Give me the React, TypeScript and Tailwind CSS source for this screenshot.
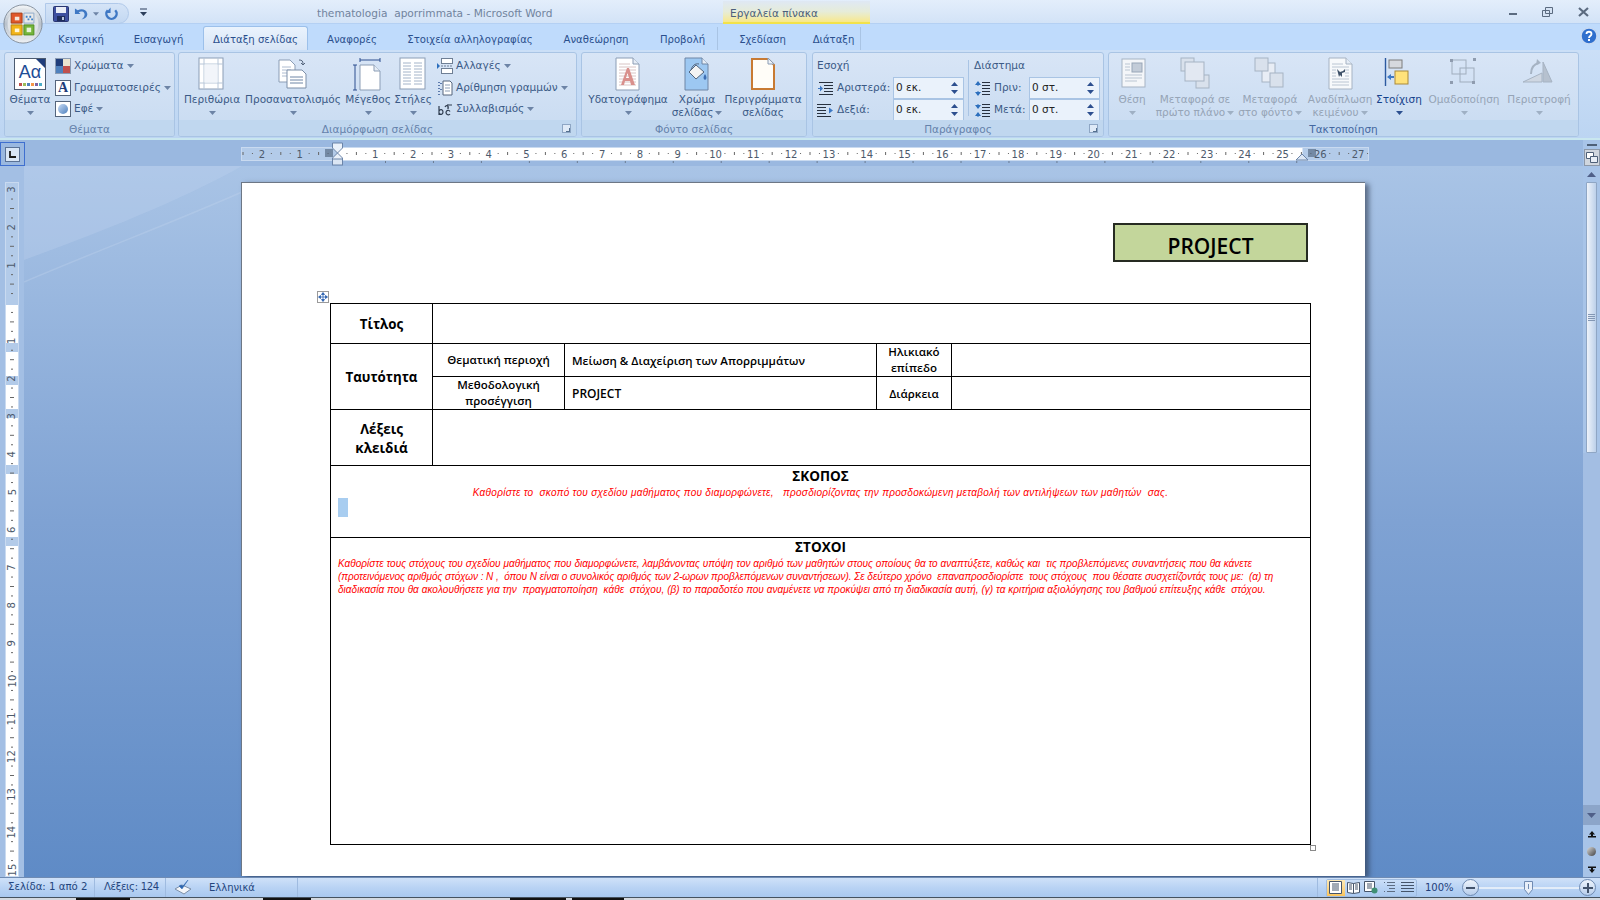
import React from "react";

const PAGE_TEXT = "font-['Open_Sans',sans-serif]";

function DropArrow({ dim = false, dark = false }: { dim?: boolean; dark?: boolean }) {
  const fill = dark ? "#2c4f8f" : dim ? "#9fb0c4" : "#6d84a6";
  return (
    <svg width="7" height="4" viewBox="0 0 7 4" className="inline-block shrink-0">
      <path d="M0 0h7L3.5 4z" fill={fill} />
    </svg>
  );
}

function Page({ children }: { children?: React.ReactNode }) {
  return (
    <svg width="34" height="34" viewBox="0 0 34 34">
      {children}
    </svg>
  );
}

const ThemesIcon = () => (
  <div className="w-[32px] h-[32px] border border-[#4d5b70] bg-white p-[1px] flex flex-col items-center relative">
    <div className="absolute right-0 top-0 w-0 h-0 border-l-[9px] border-l-transparent border-t-[9px] border-t-[#1f3d7a]" />
    <span className="font-['Liberation_Sans',sans-serif] text-[18px] leading-[21px] text-[#1f4d96] mt-[2px]">Aα</span>
    <div className="flex gap-[1px]">
      <i className="w-[3px] h-[3px] bg-[#c0504d]" />
      <i className="w-[3px] h-[3px] bg-[#9bbb59]" />
      <i className="w-[3px] h-[3px] bg-[#4f81bd]" />
      <i className="w-[3px] h-[3px] bg-[#f79646]" />
      <i className="w-[3px] h-[3px] bg-[#8064a2]" />
      <i className="w-[3px] h-[3px] bg-[#4bacc6]" />
    </div>
  </div>
);

const ColorsIcon = () => (
  <div className="w-[16px] h-[16px] grid grid-cols-2 border border-[#8a9bb3]">
    <i className="bg-[#1f3d7a]" />
    <i className="bg-[#e9e3d0]" />
    <i className="bg-[#4f81bd]" />
    <i className="bg-[#c0504d]" />
  </div>
);

const FontsIcon = () => (
  <div className="w-[16px] h-[16px] border border-[#55657c] bg-white flex items-center justify-center font-['Liberation_Serif',serif] font-bold text-[14px] leading-none text-[#1f3d7a]">
    A
  </div>
);

const EffectsIcon = () => (
  <div className="w-[16px] h-[16px] border border-[#55657c] bg-white flex items-center justify-center">
    <div className="w-[10px] h-[10px] rounded-full bg-gradient-to-br from-[#c9dcf5] to-[#4f81bd]" />
  </div>
);

const MarginsIcon = () => (
  <Page>
    <rect x="4" y="1" width="24" height="31" fill="#fff" stroke="#8b9db5" />
    <path d="M9 1v31M23 1v31M4 7h24M4 26h24" stroke="#b7c6d8" />
    <rect x="9.500" y="7.500" width="13" height="18" fill="#f2f5fa" />
  </Page>
);

const OrientationIcon = () => (
  <Page>
    <path d="M3 3h11l5 5v17H3z" fill="#fff" stroke="#8b9db5" />
    <path d="M6 10h9M6 13h9M6 16h9M6 19h9" stroke="#aebcd0" />
    <path d="M11 13h15l4 4v14H11z" fill="#fff" stroke="#7c8fa8" />
    <path d="M14 20h13M14 23h13M14 26h13" stroke="#6f86a6" />
    <path d="M23 3c3 0 4 1 4 4M25 6l2 2 2-2" fill="none" stroke="#55657c" />
  </Page>
);

const SizeIcon = () => (
  <Page>
    <path d="M9 8h14l6 6v19H9z" fill="#fff" stroke="#8b9db5" />
    <path d="M23 8v6h6" fill="#e6edf6" stroke="#8b9db5" />
    <path d="M9 3h20M9 1v4M29 1v4M4 8v25M2 8h4M2 33h4" stroke="#2c4f8f" strokeWidth="1" />
  </Page>
);

const ColumnsIcon = () => (
  <Page>
    <rect x="4" y="1" width="25" height="31" fill="#fff" stroke="#8b9db5" />
    <path d="M7 6h8M7 9h8M7 12h8M7 15h8M7 18h8M7 21h8M7 24h8M7 27h8M18 6h8M18 9h8M18 12h8M18 15h8M18 18h8M18 21h8M18 24h8M18 27h8" stroke="#a4b4c9" />
  </Page>
);

const BreaksIcon = () => (
  <svg width="16" height="16" viewBox="0 0 16 16">
    <rect x="4.500" y="0.500" width="11" height="5" fill="#fff" stroke="#6f7f95" />
    <rect x="4.500" y="10.500" width="11" height="5" fill="#fff" stroke="#6f7f95" />
    <path d="M4 8h11" stroke="#6f7f95" strokeDasharray="2 1" />
    <path d="M0 5l3 3-3 3z" fill="#2c6fbd" />
  </svg>
);

const LineNumbersIcon = () => (
  <svg width="16" height="16" viewBox="0 0 16 16">
    <path d="M6 1h7l2 2v12H6z" fill="#fff" stroke="#55657c" />
    <path d="M8 5h5M8 8h5M8 11h5" stroke="#8b9db5" />
    <path d="M2 2v1M2 5v1M2 8v1M2 11v1M2 14v1M4 3v1M4 9v1" stroke="#2c4f8f" strokeWidth="1.400" />
  </svg>
);

const HyphenIcon = () => (
  <svg width="16" height="16" viewBox="0 0 16 16">
    <path d="M2 5v9M2 10c1-2 4-2 4 1s-3 3-4 1M13 10.500c-1-2-4-1.500-4 1s3 3 4 1.500M8 6c1-2 4-2 3 2M11 3v5M12 4h3" fill="none" stroke="#2d3a4d" strokeWidth="1.200" />
  </svg>
);

const WatermarkIcon = () => (
  <Page>
    <path d="M5 1h17l6 6v26H5z" fill="#fff" stroke="#8b9db5" />
    <path d="M22 1v6h6" fill="#e6edf6" stroke="#8b9db5" />
    <path d="M8 7h11M8 10h17M8 13h17M8 16h17M8 19h17M8 22h17M8 25h17M8 28h17" stroke="#d8c4c4" />
    <path d="M10 28l6-17h2l6 17h-4l-1-4h-5l-1 4zM15 21h3l-1.500-5z" fill="#d9908c" />
  </Page>
);

const PageColorIcon = () => (
  <Page>
    <path d="M5 1h17l6 6v26H5z" fill="#9dc8f2" stroke="#6f86a6" />
    <path d="M22 1v6h6" fill="#e6edf6" stroke="#6f86a6" />
    <path d="M9 15l7-7 8 7-8 7z" fill="#f3f3f3" stroke="#55657c" />
    <path d="M11 13c1-4 4-7 8-6" fill="none" stroke="#55657c" />
    <path d="M25 17c2 3 2 5 0 6-2-1-2-3 0-6z" fill="#3d6eb3" />
  </Page>
);

const PageBorderIcon = () => (
  <Page>
    <path d="M6 2h16l6 6v24H6z" fill="#fffdf8" stroke="#c87a32" strokeWidth="2" />
    <path d="M22 1v6h6z" fill="#eef3f9" stroke="#8b9db5" />
  </Page>
);

const IndentIcon = ({ right = false }: { right?: boolean }) => (
  <svg width="16" height="14" viewBox="0 0 16 14">
    <path
      d={right ? "M0 1.500h14M0 4.500h9M0 7.500h9M0 10.500h9M0 13.500h14" : "M2 1.500h14M7 4.500h9M7 7.500h9M7 10.500h9M2 13.500h14"}
      stroke="#27303e"
    />
    <path d={right ? "M16 7.500l-4-3v6z" : "M1 7h2V4.500l3 3-3 3V8H1z"} fill="#3d78c4" />
  </svg>
);

const SpacingIcon = ({ after = false }: { after?: boolean }) => (
  <svg width="16" height="17" viewBox="0 0 16 17">
    <path d="M8 2.500h8M8 5.500h8M8 8.500h8M8 11.500h8M8 14.500h8" stroke="#27303e" />
    <path d="M4 2v4M4 11v4" stroke="#2c6fbd" />
    {after ? (
      <path d="M1 3h6L4 7zM1 14h6L4 10z" fill="#2c6fbd" />
    ) : (
      <path d="M1 5h6L4 1zM1 12h6L4 16z" fill="#2c6fbd" />
    )}
  </svg>
);

const PositionIcon = () => (
  <Page>
    <rect x="7" y="2" width="23" height="28" fill="#f4f6f9" stroke="#a6b3c3" />
    <rect x="17" y="6" width="10" height="9" fill="#c3ccd8" stroke="#98a6b8" />
    <path d="M10 7h5M10 10h5M10 13h5M10 18h17M10 21h17M10 24h12" stroke="#bac5d2" />
  </Page>
);

const FrontIcon = () => (
  <svg width="34" height="34" viewBox="0 0 34 34">
    <rect x="3" y="1" width="13" height="13" fill="#d9e1ec" stroke="#a6b3c3" />
    <rect x="18" y="18" width="13" height="13" fill="#d9e1ec" stroke="#a6b3c3" />
    <rect x="7" y="5" width="19" height="19" fill="#e2e8f2" stroke="#a6b3c3" />
  </svg>
);

const BackIcon = () => (
  <svg width="34" height="34" viewBox="0 0 34 34">
    <rect x="9" y="6" width="13" height="19" fill="#e8edf5" stroke="#a6b3c3" />
    <rect x="2" y="1" width="13" height="13" fill="#d9e1ec" stroke="#a6b3c3" />
    <rect x="17" y="16" width="13" height="14" fill="#d9e1ec" stroke="#a6b3c3" />
  </svg>
);

const WrapIcon = () => (
  <Page>
    <path d="M6 1h17l6 6v25H6z" fill="#f7f9fb" stroke="#a6b3c3" />
    <path d="M23 1v6h6" fill="#e6edf6" stroke="#a6b3c3" />
    <path d="M9 7h11M9 10h17M9 13h4M22 13h4M9 16h4M22 16h4M9 19h4M22 19h4M9 22h17M9 25h17M9 28h17" stroke="#bac5d2" />
    <path d="M14 12l3 3 3-1 2-2v3l-3 1v4l-2-2-1 2-1-4z" fill="#3f5269" />
  </Page>
);

const AlignIcon = () => (
  <Page>
    <path d="M3.500 1v28" stroke="#2c5aa0" strokeWidth="1.400" />
    <rect x="7" y="3" width="13" height="8" fill="#d6d9de" stroke="#7c7c7c" />
    <rect x="13" y="14" width="13" height="13" fill="#ffe27a" stroke="#a98a3a" />
    <path d="M5 20l4-3v2h3v2H9v2z" fill="#3d78c4" />
  </Page>
);

const GroupIcon = () => (
  <Page>
    <rect x="5" y="3" width="14" height="14" fill="none" stroke="#a0adbd" />
    <rect x="13" y="11" width="14" height="14" fill="none" stroke="#a0adbd" />
    <path d="M3 2h3v3H3zM26 1h3v3h-3zM3 24h3v3H3zM25 24h3v3h-3z" fill="#8f9caf" />
  </Page>
);

const RotateIcon = () => (
  <Page>
    <path d="M1 25l19-9v9z" fill="#cfd7e2" stroke="#a6b3c3" />
    <path d="M21 5l9 20h-9z" fill="#b6c1cf" stroke="#a6b3c3" />
    <path d="M9 17c0-6 3-10 8-11" fill="none" stroke="#a6b3c3" strokeWidth="2" />
    <path d="M15 2l4 4-5 2z" fill="#a6b3c3" />
  </Page>
);

function LargeButton({
  icon,
  label,
  label2,
  arrow = true,
  dim = false,
  dark = false,
  className,
}: {
  icon: React.ReactNode;
  label: string;
  label2?: string;
  arrow?: boolean;
  dim?: boolean;
  dark?: boolean;
  className: string;
}) {
  const color = dim ? "text-[#96a4b6]" : dark ? "text-[#15428b]" : "text-[#3b5a86]";
  return (
    <div className={`flex flex-col items-center shrink-0 ${className}`}>
      <div className="h-[34px] flex items-center justify-center">{icon}</div>
      <div className={`mt-[2px] leading-[13px] whitespace-nowrap flex items-center h-[13px] ${color}`}>{label}</div>
      {label2 ? (
        <div className={`leading-[13px] whitespace-nowrap flex items-center gap-[2px] h-[13px] ${color}`}>
          {label2}
          {arrow && <DropArrow dim={dim} />}
        </div>
      ) : (
        <div className="h-[13px] flex items-center">{arrow && <DropArrow dim={dim} dark={dark} />}</div>
      )}
    </div>
  );
}

function SmallButton({ icon, label }: { icon: React.ReactNode; label: string }) {
  return (
    <div className="h-[22px] flex items-center whitespace-nowrap text-[#3b5a86] gap-[3px]">
      <div className="w-[16px] flex justify-center">{icon}</div>
      <span>{label}</span>
      <span className="flex">
        <DropArrow />
      </span>
    </div>
  );
}

function GroupCorner() {
  return (
    <div className="absolute right-[5px] bottom-[3px] w-[9px] h-[9px] border border-[#8ea6c4] bg-[#dfeaf7] flex items-end justify-end">
      <i className="w-[4px] h-[4px] border-r border-b border-[#54708f]" />
    </div>
  );
}

function Group({
  title,
  className,
  titleColor = "text-[#6582ab]",
  corner = false,
  children,
}: {
  title: string;
  className: string;
  titleColor?: string;
  corner?: boolean;
  children: React.ReactNode;
}) {
  return (
    <div
      className={`relative h-[85px] shrink-0 rounded-[3px] border border-[#a9c4e4] bg-gradient-to-b from-[#d8e5f6] to-[#c8dbf1] flex flex-col overflow-hidden ${className}`}
    >
      <div className="h-[67px] shrink-0 pt-[4px] flex overflow-hidden">{children}</div>
      <div className={`h-[16px] shrink-0 bg-[#c0d7ef] text-center leading-[19px] ${titleColor}`}>{title}</div>
      {corner && <GroupCorner />}
    </div>
  );
}

function Spinner({ value }: { value: string }) {
  return (
    <div className="h-[22px] border border-[#a9c4e4] bg-[#eaf2fb] flex items-center justify-between pl-[2px] pr-[5px] text-[#222] w-[71px]">
      <span>{value}</span>
      <div className="flex flex-col gap-[4px]">
        <svg width="7" height="4" viewBox="0 0 7 4">
          <path d="M0 4h7L3.500 0z" fill="#2c4f8f" />
        </svg>
        <svg width="7" height="4" viewBox="0 0 7 4">
          <path d="M0 0h7L3.500 4z" fill="#2c4f8f" />
        </svg>
      </div>
    </div>
  );
}

function OfficeOrb() {
  return (
    <svg width="40" height="40" viewBox="0 0 44 44" className="absolute left-[3px] top-[4px] z-10">
      <defs>
        <linearGradient id="orb" x1="0" y1="0" x2="0" y2="1">
          <stop offset="0" stopColor="#f4f6f8" />
          <stop offset="0.5" stopColor="#b9c2cc" />
          <stop offset="1" stopColor="#eef1f4" />
        </linearGradient>
      </defs>
      <circle cx="22" cy="22" r="21" fill="url(#orb)" stroke="#7f8a97" />
      <circle cx="22" cy="22" r="17" fill="#dfe3e8" />
      <path d="M9 10h12v11H9z" fill="#e0572a" stroke="#a33a12" />
      <path d="M13 14h5v4h-5z" fill="#f5e7dc" />
      <path d="M23 10h11v11H23z" fill="#e9e9e9" stroke="#8aa7c8" />
      <path d="M9 23h12v11H9z" fill="#f2b418" stroke="#b98308" />
      <path d="M13 27h5v4h-5z" fill="#fff6d8" />
      <path d="M23 23h11v11H23z" fill="#74b53a" stroke="#4b8a1d" />
      <path d="M26 26h5v5h-5z" fill="#e6f3d8" />
      <path d="M25 13h2v2h-2zM29 13h2v2h-2zM27 16h2v2h-2zM31 16h2v2h-2z" fill="#3f82c8" />
    </svg>
  );
}

function TitleBar() {
  return (
    <div className="h-[24px] relative flex items-center bg-gradient-to-b from-[#e3eefb] to-[#d3e3f7] border-b border-[#b4d0f3]">
      <OfficeOrb />
      <div className="ml-[45px] w-[84px] h-[21px] self-start mt-[3px] shrink-0 rounded-r-[12px] bg-gradient-to-b from-[#d5e4f7] to-[#c3d8f2] border border-[#b0c9ea] flex items-center pl-[7px] gap-[5px]">
        <svg width="16" height="16" viewBox="0 0 16 16">
          <rect x="0.500" y="0.500" width="15" height="15" rx="1" fill="#3d4f9f" stroke="#2a3670" />
          <rect x="3" y="1" width="10" height="6" fill="#e9edf7" />
          <rect x="4" y="10" width="8" height="5" fill="#1f2d5c" />
          <rect x="9" y="11" width="2" height="3" fill="#b9c5df" />
        </svg>
        <svg width="14" height="14" viewBox="0 0 15 14">
          <path d="M1 1v6h6L5 5c2-1 5-1 6 1s0 5-3 7c5-1 7-4 6-7-1-4-6-5-10-3z" fill="#3f78c4" />
        </svg>
        <svg width="6" height="4" viewBox="0 0 7 4">
          <path d="M0 0h7L3.500 4z" fill="#6d84a6" />
        </svg>
        <svg width="13" height="14" viewBox="0 0 14 14" className="ml-[1px]">
          <path d="M3 3a5.500 5.500 0 1 0 8 0" fill="none" stroke="#3f78c4" strokeWidth="2.600" />
          <path d="M6 0v6H1z" fill="#3f78c4" />
        </svg>
      </div>
      <svg width="7" height="8" viewBox="0 0 7 8" className="ml-[11px] shrink-0">
        <path d="M0 1h7" stroke="#2c3f5c" />
        <path d="M0 4h7L3.500 8z" fill="#2c3f5c" />
      </svg>
      <div className="ml-[170px] w-[242px] shrink-0 mt-[4px] text-[#71849e] whitespace-pre text-[10.600px]">
        thematologia  aporrimmata - Microsoft Word
      </div>
      <div className="ml-[164px] w-[147px] h-[23px] self-start mt-[1px] bg-gradient-to-b from-[#dfe8f4] via-[#e6ecd9] to-[#f8e88a] border-b-2 border-[#f2e24a] pl-[7px] leading-[25px] text-[#4c5f7c] shrink-0">
        Εργαλεία πίνακα
      </div>
      <div className="ml-auto flex items-center pr-[11px]">
        <svg width="9" height="4" viewBox="0 0 9 4" className="mt-[7px]">
          <rect width="8" height="2" fill="#5b6b80" />
        </svg>
        <svg width="11" height="10" viewBox="0 0 11 10" className="ml-[24px]">
          <path d="M3.500 0.500h7v6h-7zM0.500 3.500h7v6h-7z" fill="#d6e3f4" stroke="#5b6b80" />
        </svg>
        <svg width="11" height="10" viewBox="0 0 11 10" className="ml-[25px]">
          <path d="M1 1l9 8M10 1l-9 8" stroke="#5b6b80" strokeWidth="2.200" />
        </svg>
      </div>
    </div>
  );
}

function Tabs() {
  return (
    <div className="h-[26px] flex items-end bg-[#bfdbfc] text-[#2a4f8d] text-[10.100px] pl-[52px] relative">
      <div className="w-[58px] h-[23px] text-center leading-[26px] shrink-0">Κεντρική</div>
      <div className="ml-[8px] w-[81px] h-[23px] text-center leading-[26px] shrink-0">Εισαγωγή</div>
      <div className="ml-[4px] w-[105px] h-[24px] text-center leading-[26px] shrink-0 rounded-t-[3px] border border-b-0 border-[#9cc0ea] bg-gradient-to-b from-[#eaf3fd] to-[#d8e5f6] text-[#2a4f8d]">
        Διάταξη σελίδας
      </div>
      <div className="w-[88px] h-[23px] text-center leading-[26px] shrink-0">Αναφορές</div>
      <div className="w-[148px] h-[23px] text-center leading-[26px] shrink-0">Στοιχεία αλληλογραφίας</div>
      <div className="w-[104px] h-[23px] text-center leading-[26px] shrink-0">Αναθεώρηση</div>
      <div className="w-[69px] h-[23px] text-center leading-[26px] shrink-0">Προβολή</div>
      <div className="w-[90px] h-[23px] text-center leading-[26px] shrink-0 border-l border-[#a9c4e4]">Σχεδίαση</div>
      <div className="w-[54px] h-[23px] text-center leading-[26px] shrink-0 border-r border-[#a9c4e4]">Διάταξη</div>
      <svg width="18" height="18" viewBox="0 0 18 18" className="ml-auto mr-[2px] mb-[5px]">
        <circle cx="9" cy="9" r="8" fill="#2f6fce" stroke="#c7d9f2" strokeWidth="1.500" />
        <path d="M6.500 7c0-3 5-3 5 0 0 2-2.500 2-2.500 4" fill="none" stroke="#fff" strokeWidth="1.800" />
        <rect x="8" y="12" width="2" height="2" fill="#fff" />
      </svg>
    </div>
  );
}

function Ribbon() {
  return (
    <div className="h-[90px] bg-gradient-to-b from-[#cbdff7] to-[#bcd5f2] border-b-2 border-[#c9e7ef] pt-[2px] pl-[4px] flex text-[10.500px] shrink-0">
      <Group title="Θέματα" className="w-[171px]">
        <LargeButton icon={<ThemesIcon />} label="Θέματα" className="w-[50px]" />
        <div className="flex flex-col -mt-[2px]">
          <SmallButton icon={<ColorsIcon />} label="Χρώματα" />
          <SmallButton icon={<FontsIcon />} label="Γραμματοσειρές" />
          <SmallButton icon={<EffectsIcon />} label="Εφέ" />
        </div>
      </Group>
      <Group title="Διαμόρφωση σελίδας" corner className="ml-[3px] w-[399px]">
        <LargeButton icon={<MarginsIcon />} label="Περιθώρια" className="ml-[4px] w-[58px]" />
        <LargeButton icon={<OrientationIcon />} label="Προσανατολισμός" className="ml-[4px] w-[96px]" />
        <LargeButton icon={<SizeIcon />} label="Μέγεθος" className="ml-[4px] w-[46px]" />
        <LargeButton icon={<ColumnsIcon />} label="Στήλες" className="ml-[4px] w-[36px]" />
        <div className="ml-[6px] flex flex-col -mt-[2px]">
          <SmallButton icon={<BreaksIcon />} label="Αλλαγές" />
          <SmallButton icon={<LineNumbersIcon />} label="Αρίθμηση γραμμών" />
          <SmallButton icon={<HyphenIcon />} label="Συλλαβισμός" />
        </div>
      </Group>
      <Group title="Φόντο σελίδας" className="ml-[4px] w-[226px]">
        <LargeButton icon={<WatermarkIcon />} label="Υδατογράφημα" className="ml-[4px] w-[84px]" />
        <LargeButton icon={<PageColorIcon />} label="Χρώμα" label2="σελίδας" className="ml-[3px] w-[48px]" />
        <LargeButton icon={<PageBorderIcon />} label="Περιγράμματα" label2="σελίδας" arrow={false} className="ml-[3px] w-[78px]" />
      </Group>
      <Group title="Παράγραφος" corner className="ml-[5px] w-[292px]">
        <div className="pl-[4px] w-[155px] text-[#3b5a86]">
          <div className="h-[20px] leading-[17px]">Εσοχή</div>
          <div className="flex items-center gap-[4px] h-[22px]">
            <IndentIcon />
            <span className="w-[52px] whitespace-nowrap">Αριστερά:</span>
            <Spinner value="0 εκ." />
          </div>
          <div className="flex items-center gap-[4px] h-[22px]">
            <IndentIcon right />
            <span className="w-[52px]">Δεξιά:</span>
            <Spinner value="0 εκ." />
          </div>
        </div>
        <div className="w-[1px] h-[56px] mt-[3px] bg-[#a9c4e4]" />
        <div className="pl-[5px] w-[134px] text-[#3b5a86]">
          <div className="h-[20px] leading-[17px]">Διάστημα</div>
          <div className="flex items-center gap-[4px] h-[22px]">
            <SpacingIcon />
            <span className="w-[31px]">Πριν:</span>
            <Spinner value="0 στ." />
          </div>
          <div className="flex items-center gap-[4px] h-[22px]">
            <SpacingIcon after />
            <span className="w-[31px]">Μετά:</span>
            <Spinner value="0 στ." />
          </div>
        </div>
      </Group>
      <Group title="Τακτοποίηση" titleColor="text-[#44689f]" className="ml-[4px] w-[471px]">
        <LargeButton icon={<PositionIcon />} label="Θέση" dim className="ml-[4px] w-[38px]" />
        <LargeButton icon={<FrontIcon />} label="Μεταφορά σε" label2="πρώτο πλάνο" dim className="ml-[2px] w-[84px]" />
        <LargeButton icon={<BackIcon />} label="Μεταφορά" label2="στο φόντο" dim className="w-[66px]" />
        <LargeButton icon={<WrapIcon />} label="Αναδίπλωση" label2="κειμένου" dim className="ml-[2px] w-[70px]" />
        <LargeButton icon={<AlignIcon />} label="Στοίχιση" dark className="ml-[1px] w-[46px]" />
        <LargeButton icon={<GroupIcon />} label="Ομαδοποίηση" dim className="ml-[1px] w-[82px]" />
        <LargeButton icon={<RotateIcon />} label="Περιστροφή" dim className="ml-[1px] w-[66px]" />
      </Group>
    </div>
  );
}

function HorizontalRuler() {
  const zero = 96.5;
  const unit = 37.8;
  const numbers = Array.from({ length: 30 }, (_, i) => i - 2).filter((n) => n !== 0);
  const stops = Array.from({ length: 20 }, (_, i) => 144.5 + i * 47.96);
  const ticks: number[] = [];
  for (let i = -3; i < 28; i++) ticks.push(i);
  return (
    <svg width="1128" height="26" viewBox="0 0 1128 26" className="ml-[216px] shrink-0">
      <rect x="0.500" y="7.500" width="1127" height="13" fill="#b3cbe9" stroke="#c9daf0" />
      <rect x="96.500" y="8" width="965" height="12" fill="#fff" />
      {ticks.map((i) => (
        <g key={i} stroke="#666" strokeWidth="1">
          <path d={`M${zero + (i + 0.25) * unit} 13v1M${zero + (i + 0.75) * unit} 13v1M${zero + (i + 0.5) * unit} 12v3`} />
        </g>
      ))}
      {numbers.map((n) => (
        <text
          key={n}
          x={zero + n * unit}
          y="17.500"
          textAnchor="middle"
          fontSize="10"
          fontFamily="'DejaVu Sans', sans-serif"
          fill="#4d5a6c"
        >
          {n > 0 ? n : -n}
        </text>
      ))}
      {stops.map((x) => (
        <path key={x} d={`M${x} 21v2`} stroke="#6b7c92" />
      ))}
      <path d="M91.500 3h10v5l-5 5-5-5zM91.500 23h10v-5l-5-5-5 5z" fill="#eaf1fa" stroke="#6b84a8" />
      <rect x="91.500" y="19" width="10" height="6" fill="#dbe6f4" stroke="#6b84a8" />
      <path d="M84 10h8M84 12h8M84 14h8M84 16h8M85 9v8M87 9v8M89 9v8M91 9v8" stroke="#51667f" strokeWidth="0.800" />
      <path d="M1055 20l6-6 6 6z" fill="#dbe6f4" stroke="#6b84a8" />
      <path d="M1067 10h8M1067 12h8M1067 14h8M1067 16h8M1068 9v8M1070 9v8M1072 9v8M1074 9v8" stroke="#51667f" strokeWidth="0.800" />
    </svg>
  );
}

function VerticalRuler() {
  const zero = 121;
  const unit = 37.8;
  const bars = [161, 194, 227, 283, 355];
  const numbers = [-3, -2, -1, 1, 2, 3, 4, 5, 6, 7, 8, 9, 10, 11, 12, 13, 14, 15];
  const ticks = Array.from({ length: 19 }, (_, i) => i - 4);
  return (
    <svg width="14" height="695" viewBox="0 0 14 695" className="block">
      <rect x="0.500" y="0.500" width="13" height="694" fill="#fff" stroke="#c9daf0" />
      <rect x="1" y="1" width="12" height="122" fill="#b3cbe9" />
      {bars.map((y) => (
        <rect key={y} x="1" y={y} width="12" height="9" fill="#b3cbe9" />
      ))}
      {ticks.map((i) => (
        <path
          key={i}
          d={`M6 ${zero + (i + 0.25) * unit}h2M6 ${zero + (i + 0.75) * unit}h2M5 ${zero + (i + 0.5) * unit}h4`}
          stroke="#666"
        />
      ))}
      {numbers.map((n) => (
        <text
          key={n}
          x="7"
          y={zero + n * unit}
          transform={`rotate(-90 7 ${zero + n * unit})`}
          textAnchor="middle"
          dy="3.500"
          fontSize="10"
          fontFamily="'DejaVu Sans', sans-serif"
          fill="#4d5a6c"
        >
          {n > 0 ? n : -n}
        </text>
      ))}
    </svg>
  );
}

const redLine = "whitespace-pre text-[#ff0000] italic font-['Liberation_Sans',sans-serif] text-[10px] leading-[13px]";

function DocumentPage() {
  return (
    <div className={`w-[1124px] h-[694px] ml-[217px] mt-[16px] bg-white shrink-0 border-t border-l border-[#6d7785] shadow-[4px_2px_5px_rgba(40,50,70,0.6)] ${PAGE_TEXT} text-black relative overflow-hidden`}>
      <div className="flex justify-end pt-[40px] pr-[57px]">
        <div className="w-[195px] h-[39px] border-2 border-[#262b22] bg-[#c3d69b] text-center text-[21px] leading-[42px] font-semibold">
          PROJECT
        </div>
      </div>
      <div className="relative ml-[88px] mt-[41px] w-[982px]">
        <svg width="12" height="12" viewBox="0 0 12 12" className="absolute left-[-13px] top-[-12px]">
          <rect x="0.500" y="0.500" width="11" height="11" fill="#fff" stroke="#9a9a9a" />
          <path d="M6 2v8M2 6h8M6 1.500l-1.500 2h3zM6 10.500l-1.500-2h3zM1.500 6l2-1.500v3zM10.500 6l-2-1.500v3z" stroke="#2b5fae" fill="#2b5fae" strokeWidth="0.800" />
        </svg>
        <table className="w-[981px] table-fixed border-collapse border-[1.500px] border-black">
          <colgroup>
            <col className="w-[102px]" />
            <col className="w-[132px]" />
            <col className="w-[312px]" />
            <col className="w-[75px]" />
            <col />
          </colgroup>
          <tbody>
            <tr className="h-[40px]">
              <td className="border border-black text-center pt-[2px] font-bold text-[13.300px]">Τίτλος</td>
              <td colSpan={4} className="border border-black" />
            </tr>
            <tr className="h-[33px]">
              <td rowSpan={2} className="border border-black text-center pt-[2px] font-bold text-[13.300px]">Ταυτότητα</td>
              <td className="border border-black text-center font-semibold text-[11.500px]">Θεματική περιοχή</td>
              <td className="border border-black pl-[7px] pt-[1px] font-semibold text-[11.500px]">Μείωση &amp; Διαχείριση των Απορριμμάτων</td>
              <td className="border border-black text-center font-semibold text-[11.500px] leading-[16px]">
                Ηλικιακό
                <br />
                επίπεδο
              </td>
              <td className="border border-black" />
            </tr>
            <tr className="h-[33px]">
              <td className="border border-black text-center font-semibold text-[11.500px] leading-[16px]">
                Μεθοδολογική
                <br />
                προσέγγιση
              </td>
              <td className="border border-black pl-[7px] pt-[1px] font-semibold text-[12px]">PROJECT</td>
              <td className="border border-black text-center pt-[1px] font-semibold text-[11.500px]">Διάρκεια</td>
              <td className="border border-black" />
            </tr>
            <tr className="h-[56px]">
              <td className="border border-black text-center pt-[2px] font-bold text-[13.500px] leading-[19px]">
                Λέξεις
                <br />
                κλειδιά
              </td>
              <td colSpan={4} className="border border-black" />
            </tr>
            <tr className="h-[72px]">
              <td colSpan={5} className="border border-black align-top px-[7px]">
                <div className="text-center font-bold text-[13.500px] leading-[20px]">ΣΚΟΠΟΣ</div>
                <div className={`${redLine} text-center tracking-[0.28px]`}>
                  Καθορίστε το  σκοπό του σχεδίου μαθήματος που διαμορφώνετε,   προσδιορίζοντας την προσδοκώμενη μεταβολή των αντιλήψεων των μαθητών  σας.
                </div>
                <div className="-mt-[1px] w-[10px] h-[19px] bg-[#a8cdf0]" />
              </td>
            </tr>
            <tr className="h-[307px]">
              <td colSpan={5} className="border border-black align-top px-[7px]">
                <div className="text-center font-bold text-[13.500px] leading-[19px]">ΣΤΟΧΟΙ</div>
                <div className={`${redLine} tracking-[0.03px]`}>
                  Καθορίστε τους στόχους του σχεδίου μαθήματος που διαμορφώνετε, λαμβάνοντας υπόψη τον αριθμό των μαθητών στους οποίους θα το αναπτύξετε, καθώς και  τις προβλεπόμενες συναντήσεις που θα κάνετε
                </div>
                <div className={`${redLine} tracking-[-0.04px]`}>
                  (προτεινόμενος αριθμός στόχων : Ν ,  όπου Ν είναι ο συνολικός αριθμός των 2-ωρων προβλεπόμενων συναντήσεων). Σε δεύτερο χρόνο  επαναπροσδιορίστε  τους στόχους  που θέσατε συσχετίζοντάς τους με:  (α) τη
                </div>
                <div className={`${redLine} tracking-[0.045px]`}>
                  διαδικασία που θα ακολουθήσετε για την  πραγματοποίηση  κάθε  στόχου, (β) το παραδοτέο που αναμένετε να προκύψει από τη διαδικασία αυτή, (γ) τα κριτήρια αξιολόγησης του βαθμού επίτευξης κάθε  στόχου.
                </div>
              </td>
            </tr>
          </tbody>
        </table>
        <div className="absolute right-[-4px] bottom-[-6px] w-[6px] h-[6px] border border-[#8a8a8a] bg-white" />
      </div>
    </div>
  );
}

function Scrollbar() {
  return (
    <div className="w-[17px] shrink-0 bg-[#a8c4e8] flex flex-col items-center">
      <div className="h-[9px] w-full flex items-center justify-center">
        <i className="w-[10px] h-[2px] bg-[#4e6078]" />
      </div>
      <div className="w-[16px] h-[17px] border border-[#8d98a8] bg-[#d0d6de] flex items-center justify-center">
        <svg width="12" height="11" viewBox="0 0 12 11">
          <path d="M0.500 0.500h7v6h-7z" fill="#fff" stroke="#4e6078" />
          <path d="M4.500 4.500h7v6h-7z" fill="#e8eef6" stroke="#4e6078" />
        </svg>
      </div>
      <div className="h-[16px] flex items-center">
        <svg width="9" height="5" viewBox="0 0 9 5">
          <path d="M0 5h9L4.500 0z" fill="#4f5f88" />
        </svg>
      </div>
      <div className="w-[11px] h-[271px] rounded-[1px] border border-[#8fa6c4] bg-gradient-to-r from-[#eef3fa] to-[#bcd0ea] flex flex-col items-center justify-center gap-[1px]">
        <i className="w-[7px] h-[1px] bg-[#8397b4]" />
        <i className="w-[7px] h-[1px] bg-[#8397b4]" />
        <i className="w-[7px] h-[1px] bg-[#8397b4]" />
        <i className="w-[7px] h-[1px] bg-[#8397b4]" />
      </div>
      <div className="flex-1 w-full bg-[#a3bee3]" />
      <div className="w-full h-[20px] bg-[#8ca5c9] flex items-center justify-center">
        <svg width="9" height="5" viewBox="0 0 9 5">
          <path d="M0 0h9L4.500 5z" fill="#4f5f88" />
        </svg>
      </div>
      <div className="h-[17px] flex items-center mt-[1px]">
        <svg width="8" height="8" viewBox="0 0 8 8">
          <path d="M4 0l3 3.500H1zM0 5h8v1.500H0z M3 3h2v2H3z" fill="#111" />
        </svg>
      </div>
      <div className="h-[17px] flex items-center">
        <div className="w-[9px] h-[9px] rounded-full bg-gradient-to-br from-[#ddd] to-[#444]" />
      </div>
      <div className="h-[17px] flex items-center">
        <svg width="8" height="8" viewBox="0 0 8 8">
          <path d="M4 8L1 4.500h6zM0 1.500h8V3H0z M3 3h2v2H3z" fill="#111" />
        </svg>
      </div>
    </div>
  );
}

function Workspace() {
  return (
    <div className="h-[737px] flex shrink-0">
      <div className="w-[1583px] flex flex-col shrink-0">
        <div className="h-[26px] flex bg-[#9ab8e0]">
          <div className="w-[25px] h-[24px] mt-[2px] border border-[#3f6fcf] flex items-center justify-center shrink-0">
            <div className="w-[15px] h-[15px] bg-[#d9e6f6] border border-[#5a7296] flex items-center justify-center">
              <svg width="7" height="7" viewBox="0 0 7 7">
                <path d="M1 0v6h6" fill="none" stroke="#1a1a1a" strokeWidth="1.800" />
              </svg>
            </div>
          </div>
          <HorizontalRuler />
        </div>
        <div className="flex h-[711px]">
          <div className="w-[24px] shrink-0 bg-[#a3bfe4] pl-[5px] pt-[16px]">
            <VerticalRuler />
          </div>
          <div className="flex-1 relative overflow-hidden bg-gradient-to-b from-[#a9c4e6] via-[#7fa2d3] to-[#5f8bc6]">
            <svg width="1559" height="711" viewBox="0 0 1559 711" className="absolute inset-0">
              <path d="M0 94C70 68 150 38 218 0H0z" fill="#bcd2ed" opacity="0.35" />
              <path d="M0 116C80 82 150 56 218 26" fill="none" stroke="#c6d8ef" opacity="0.3" strokeWidth="1.500" />
            </svg>
            <div className="relative">
              <DocumentPage />
            </div>
          </div>
        </div>
      </div>
      <Scrollbar />
    </div>
  );
}

function StatusBar() {
  return (
    <div className="h-[20px] shrink-0 flex items-center bg-gradient-to-b from-[#cfe1f9] via-[#b9d3f4] to-[#a9c8ef] border-t border-[#6f8bb3] text-[#24457d] whitespace-nowrap">
      <div className="w-[95px] pl-[8px] border-r border-[#9fbbe0] h-full leading-[18px] text-[10.200px]">Σελίδα: 1 από 2</div>
      <div className="w-[71px] pl-[9px] border-r border-[#9fbbe0] h-full leading-[18px] text-[10px] tracking-[-0.3px]">Λέξεις: 124</div>
      <div className="w-[132px] pl-[8px] border-r border-[#9fbbe0] h-full flex items-center gap-[17px] text-[10px]">
        <svg width="18" height="15" viewBox="0 0 18 15">
          <path d="M1 9l7-4 9 4-7 5z" fill="#f2f5fa" stroke="#7c8fa8" />
          <path d="M5 6l3 3 6-9-5 6-2-1z" fill="#2d66b0" stroke="#2d66b0" strokeWidth="0.500" />
        </svg>
        <span>Ελληνικά</span>
      </div>
      <div className="ml-auto flex items-center h-full border-l border-[#9fbbe0] pl-[8px]">
        <div className="w-[91px] h-[18px] flex rounded-[2px] border border-[#9fbbe0]">
          <div className="w-[18px] flex items-center justify-center bg-gradient-to-b from-[#fde9b4] to-[#f9c45c]">
            <svg width="13" height="13" viewBox="0 0 13 13">
              <path d="M0.500 0.500h12v12H.5z" fill="#fff" stroke="#45546a" />
              <path d="M3 3h7M3 5h7M3 7h7M3 9h7" stroke="#45546a" />
            </svg>
          </div>
          <div className="w-[18px] flex items-center justify-center">
            <svg width="13" height="13" viewBox="0 0 13 13">
              <path d="M0.500 1.500l6 1 6-1v10l-6 1-6-1z" fill="#fff" stroke="#45546a" />
              <path d="M6.500 2.500v10M2 4h3M2 6h3M2 8h3M8 4h3M8 6h3M8 8h3" stroke="#45546a" />
            </svg>
          </div>
          <div className="w-[18px] flex items-center justify-center">
            <svg width="14" height="13" viewBox="0 0 14 13">
              <path d="M0.500 0.500h10v10H.5z" fill="#fff" stroke="#45546a" />
              <path d="M3 3h5M3 5h5M3 7h5" stroke="#45546a" />
              <circle cx="10.500" cy="9.500" r="3" fill="#3f8f74" />
            </svg>
          </div>
          <div className="w-[18px] flex items-center justify-center">
            <svg width="13" height="13" viewBox="0 0 13 13">
              <path d="M1 1.500h1M4 1.500h8M4 4.500h8M6 7.500h6M4 10.500h8M1 10.500h1" stroke="#5d6c82" />
            </svg>
          </div>
          <div className="w-[18px] flex items-center justify-center">
            <svg width="13" height="13" viewBox="0 0 13 13">
              <path d="M0 1.500h13M0 4.500h13M0 7.500h13M0 10.500h13" stroke="#45546a" />
            </svg>
          </div>
        </div>
        <div className="ml-[8px] w-[28px] text-[#1f3d7a] text-[10px]">100%</div>
        <div className="ml-[9px] w-[17px] h-[17px] rounded-full border border-[#6f8bb3] bg-gradient-to-b from-[#eef4fc] to-[#b7cdeb] flex items-center justify-center">
          <i className="w-[9px] h-[2px] bg-[#43536b]" />
        </div>
        <div className="w-[100px] h-[2px] bg-[#e3edf9] relative">
          <svg width="9" height="14" viewBox="0 0 9 14" className="absolute left-[45px] top-[-6px]">
            <path d="M0.500 0.500h8v8l-4 5-4-5z" fill="#e8eff9" stroke="#6f8bb3" />
            <path d="M4.500 3v5" stroke="#6f8bb3" />
          </svg>
        </div>
        <div className="w-[17px] h-[17px] mr-[4px] rounded-full border border-[#6f8bb3] bg-gradient-to-b from-[#eef4fc] to-[#b7cdeb] flex items-center justify-center">
          <svg width="10" height="10" viewBox="0 0 10 10">
            <path d="M5 0v10M0 5h10" stroke="#43536b" strokeWidth="2" />
          </svg>
        </div>
      </div>
    </div>
  );
}

export default function App() {
  return (
    <div className="w-[1600px] h-[900px] overflow-hidden flex flex-col bg-[#d8e5f6] font-['DejaVu_Sans',sans-serif] text-[10.500px]">
      <TitleBar />
      <Tabs />
      <Ribbon />
      <Workspace />
      <StatusBar />
      <div className="h-[3px] shrink-0 flex bg-[#d4d9e0] border-t border-[#45525f]">
        <i className="ml-[76px] w-[54px] bg-[#111]" />
        <i className="ml-[133px] w-[48px] bg-[#111]" />
        <i className="ml-[199px] w-[56px] bg-[#111]" />
        <i className="ml-[6px] w-[52px] bg-[#111]" />
      </div>
    </div>
  );
}
